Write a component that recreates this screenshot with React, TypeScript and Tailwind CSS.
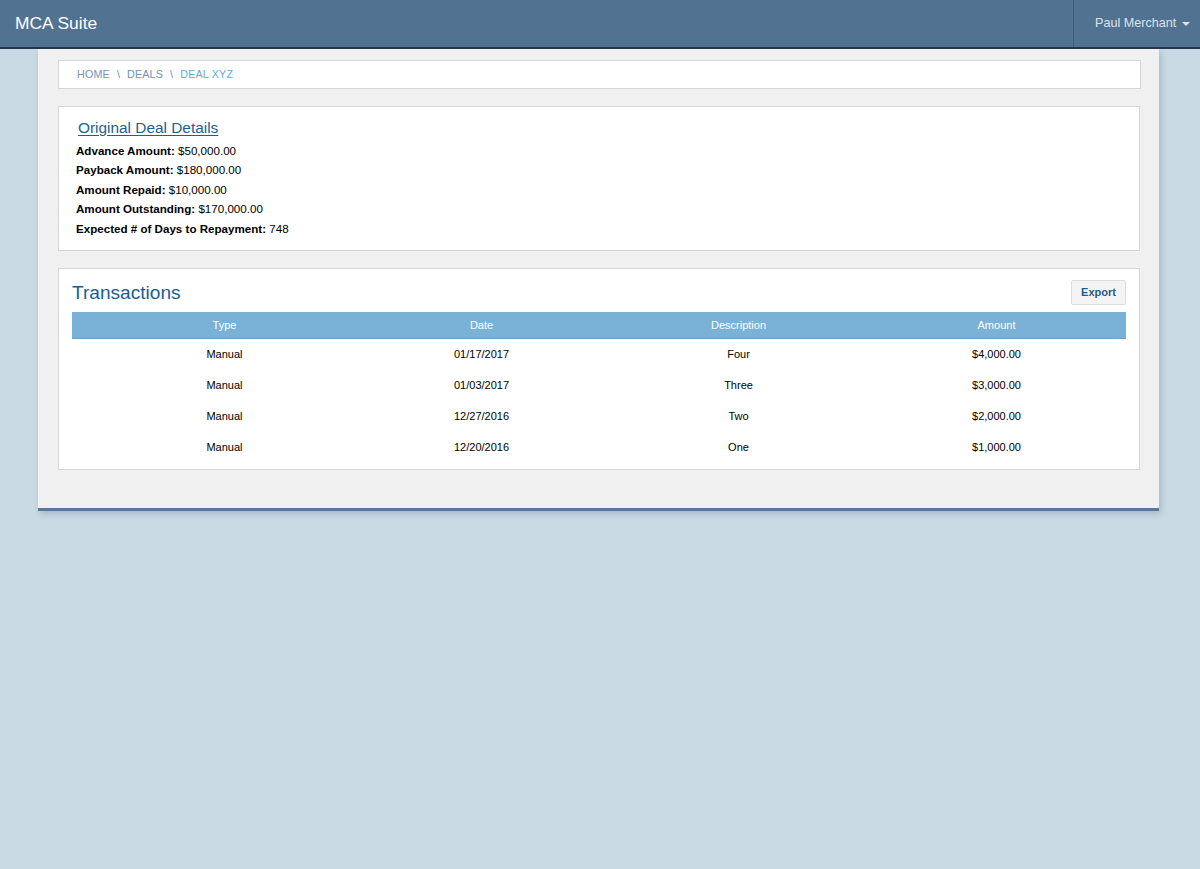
import React from "react";

const rows = [
  { type: "Manual", date: "01/17/2017", desc: "Four", amount: "$4,000.00" },
  { type: "Manual", date: "01/03/2017", desc: "Three", amount: "$3,000.00" },
  { type: "Manual", date: "12/27/2016", desc: "Two", amount: "$2,000.00" },
  { type: "Manual", date: "12/20/2016", desc: "One", amount: "$1,000.00" },
];

const details: [string, string][] = [
  ["Advance Amount:", "$50,000.00"],
  ["Payback Amount:", "$180,000.00"],
  ["Amount Repaid:", "$10,000.00"],
  ["Amount Outstanding:", "$170,000.00"],
  ["Expected # of Days to Repayment:", "748"],
];

export default function App() {
  return (
    <div
      className="min-h-[869px] w-full bg-[#c9dae4]"
      style={{ fontFamily: '"Liberation Sans", Arial, sans-serif' }}
    >
      <nav className="flex h-[49px] items-stretch border-b-2 border-[#24364a] bg-[#527291]">
        <div className="flex flex-1 items-center pb-[1px] pl-[15px] text-[17.4px] text-white">MCA Suite</div>
        <div className="flex w-[127px] items-center border-l border-[#405d7a] pb-[1px] pl-[21px] text-[12.6px] text-[#dbe3ea]">
          <span>Paul Merchant</span>
          <span className="ml-[6px] mt-[1px] h-0 w-0 border-l-[4px] border-r-[4px] border-t-[4px] border-l-transparent border-r-transparent border-t-[#dbe3ea]" />
        </div>
      </nav>

      <div className="ml-[38px] w-[1121px] border-b-[3px] border-[#5a7896] bg-[#f1f0f0] px-[20px] pb-[38px] pt-[11px] shadow-[2px_3px_6px_rgba(60,90,120,0.25)]">
        <div className="flex h-[29px] w-[1083px] items-center border border-[#d6d6d6] bg-white pl-[18px] text-[10.7px] tracking-[0.2px]">
          <span className="text-[#7193b5]">HOME</span>
          <span className="mx-[7px] text-[#7193b5]">\</span>
          <span className="text-[#7193b5]">DEALS</span>
          <span className="mx-[7px] text-[#7193b5]">\</span>
          <span className="text-[#5eaae2]">DEAL XYZ</span>
        </div>

        <div className="mt-[17px] h-[145px] w-[1082px] border border-[#d6d6d6] bg-white pl-[17px] pt-[11px]">
          <div className="ml-[2px] text-[15.4px] leading-[20px] text-[#1b5f93] underline underline-offset-[2px]">
            Original Deal Details
          </div>
          <div className="mt-[3px] text-[11.6px] leading-[19.4px] text-black">
            {details.map(([k, v]) => (
              <div key={k}>
                <span className="font-bold">{k}</span> {v}
              </div>
            ))}
          </div>
        </div>

        <div className="mt-[17px] w-[1082px] border border-[#d6d6d6] bg-white px-[13px] pb-[6px] pt-[11px]">
          <div className="flex h-[24px] items-center justify-between">
            <div className="pt-[1px] text-[19.1px] leading-[24px] text-[#1a5d92]">Transactions</div>
            <button className="h-[25px] w-[55px] rounded-[2px] border border-[#dddddd] bg-[#f4f4f4] text-[11px] font-bold text-[#1f5b8c]">
              Export
            </button>
          </div>
          <div className="mt-[8px]">
            <div className="grid h-[27px] grid-cols-[281px_257px_257px_259px] items-center border-b border-[#68a0c8] bg-[#7ab1d7] text-[11px] text-white">
              <div className="pl-[24px] text-center">Type</div>
              <div className="text-center">Date</div>
              <div className="text-center">Description</div>
              <div className="text-center">Amount</div>
            </div>
            {rows.map((r) => (
              <div
                key={r.desc}
                className="grid h-[31px] grid-cols-[281px_257px_257px_259px] items-center text-[11px] text-black"
              >
                <div className="pl-[24px] text-center">{r.type}</div>
                <div className="text-center">{r.date}</div>
                <div className="text-center">{r.desc}</div>
                <div className="text-center">{r.amount}</div>
              </div>
            ))}
          </div>
        </div>
      </div>
    </div>
  );
}
